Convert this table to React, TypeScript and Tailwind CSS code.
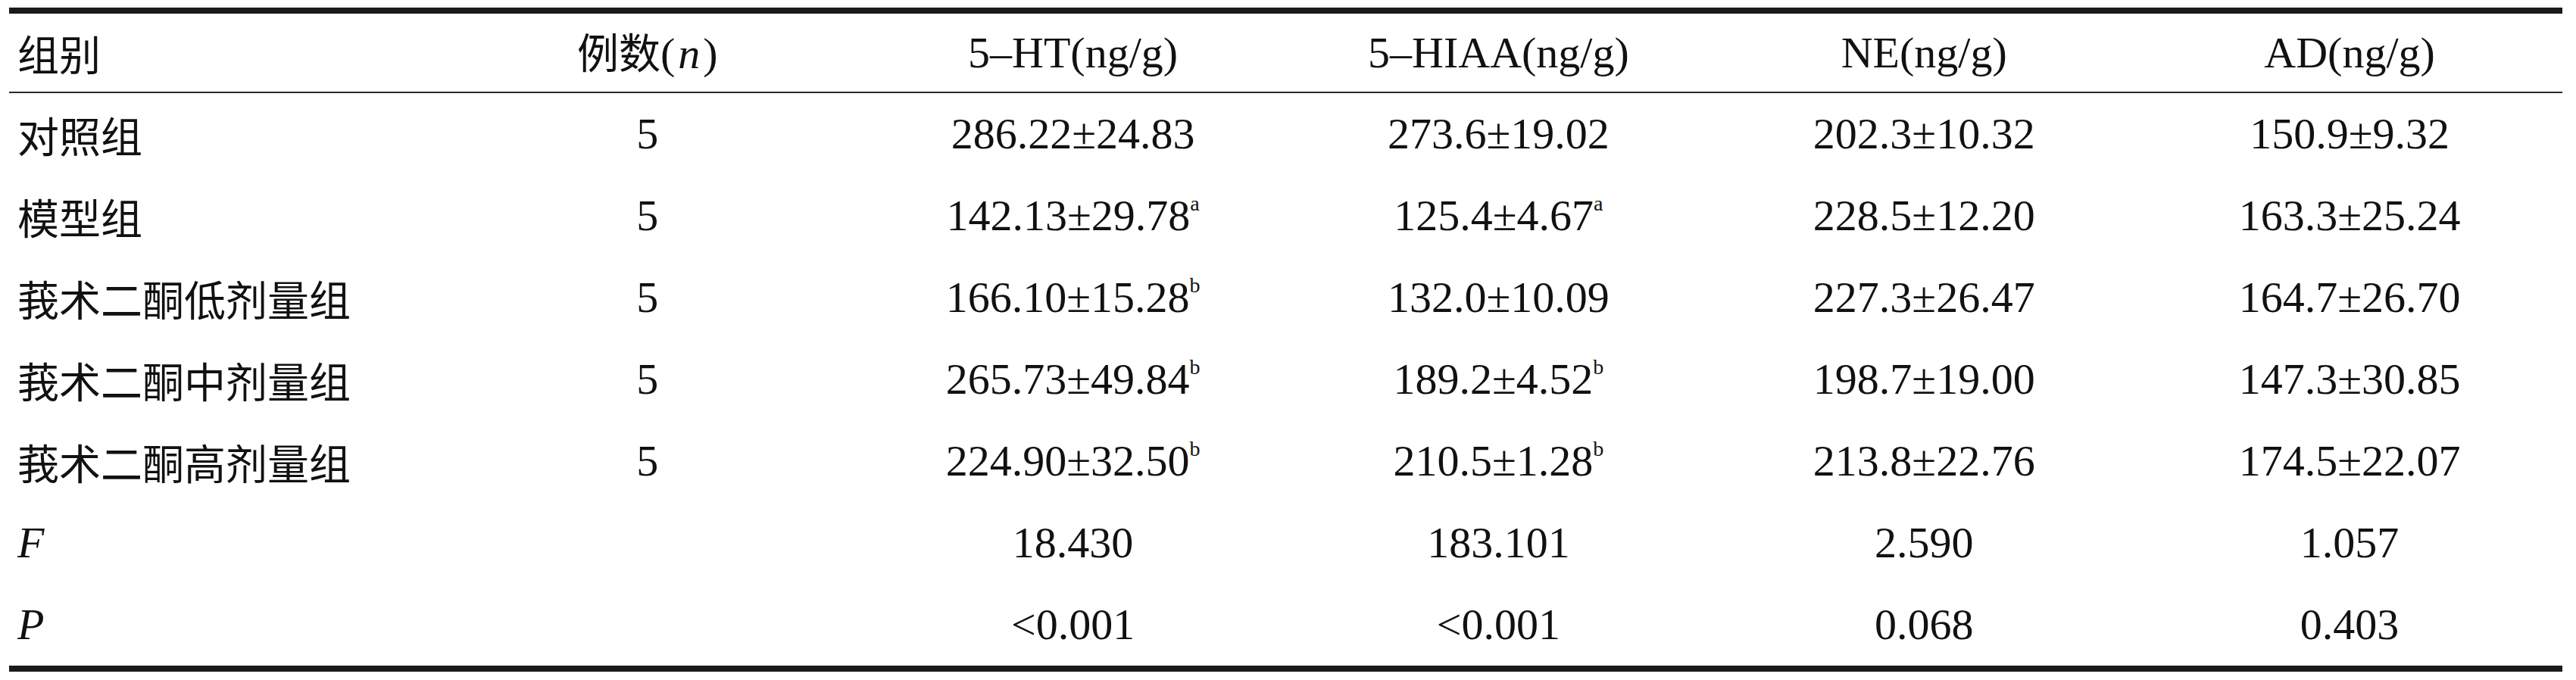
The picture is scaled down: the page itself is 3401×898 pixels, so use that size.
const serif = "font-['Liberation_Serif','Noto_Sans_CJK_SC',serif]";
const cjk = "font-['Noto_Sans_CJK_SC',sans-serif]";

type Cell = { value: string; sup?: string };

const rows: { group: string; italic?: boolean; n: string; cells: Cell[] }[] = [
  {
    group: "对照组",
    n: "5",
    cells: [{ value: "286.22±24.83" }, { value: "273.6±19.02" }, { value: "202.3±10.32" }, { value: "150.9±9.32" }],
  },
  {
    group: "模型组",
    n: "5",
    cells: [
      { value: "142.13±29.78", sup: "a" },
      { value: "125.4±4.67", sup: "a" },
      { value: "228.5±12.20" },
      { value: "163.3±25.24" },
    ],
  },
  {
    group: "莪术二酮低剂量组",
    n: "5",
    cells: [{ value: "166.10±15.28", sup: "b" }, { value: "132.0±10.09" }, { value: "227.3±26.47" }, { value: "164.7±26.70" }],
  },
  {
    group: "莪术二酮中剂量组",
    n: "5",
    cells: [
      { value: "265.73±49.84", sup: "b" },
      { value: "189.2±4.52", sup: "b" },
      { value: "198.7±19.00" },
      { value: "147.3±30.85" },
    ],
  },
  {
    group: "莪术二酮高剂量组",
    n: "5",
    cells: [
      { value: "224.90±32.50", sup: "b" },
      { value: "210.5±1.28", sup: "b" },
      { value: "213.8±22.76" },
      { value: "174.5±22.07" },
    ],
  },
  {
    group: "F",
    italic: true,
    n: "",
    cells: [{ value: "18.430" }, { value: "183.101" }, { value: "2.590" }, { value: "1.057" }],
  },
  {
    group: "P",
    italic: true,
    n: "",
    cells: [{ value: "<0.001" }, { value: "<0.001" }, { value: "0.068" }, { value: "0.403" }],
  },
];

function Value({ cell }: { cell: Cell }) {
  return (
    <div className={`text-center text-[58px] leading-none ${serif}`}>
      {cell.value}
      {cell.sup && <sup className="relative -top-[6px] text-[28px] leading-none align-super">{cell.sup}</sup>}
    </div>
  );
}

export default function App() {
  return (
    <main className="min-h-screen bg-white pl-[12px] pt-[10px] text-[#111]">
      <div className="w-[3371px] border-y-[8px] border-[#1a1a1a]">
        <div className="grid h-[105px] grid-cols-6 items-center border-b-2 border-[#2a2a2a]">
          <div className={`pl-[11px] text-[55px] leading-none ${cjk}`}>组别</div>
          <div className="text-center leading-none">
            <span className={`text-[55px] ${cjk}`}>例数</span>
            <span className={`text-[58px] ${serif}`}>
              (<span className="mx-[4px] italic">n</span>)
            </span>
          </div>
          <div className={`text-center text-[58px] leading-none ${serif}`}>5–HT(ng/g)</div>
          <div className={`text-center text-[58px] leading-none ${serif}`}>5–HIAA(ng/g)</div>
          <div className={`text-center text-[58px] leading-none ${serif}`}>NE(ng/g)</div>
          <div className={`text-center text-[58px] leading-none ${serif}`}>AD(ng/g)</div>
        </div>

        {rows.map((row) => (
          <div className="grid h-[108px] grid-cols-6 items-center" key={row.group}>
            {row.italic ? (
              <div className={`pl-[11px] text-[58px] leading-none italic ${serif}`}>{row.group}</div>
            ) : (
              <div className={`pl-[11px] text-[55px] leading-none ${cjk}`}>{row.group}</div>
            )}
            <div className={`text-center text-[58px] leading-none ${serif}`}>{row.n}</div>
            {row.cells.map((cell, i) => (
              <Value cell={cell} key={i} />
            ))}
          </div>
        ))}
      </div>
    </main>
  );
}
